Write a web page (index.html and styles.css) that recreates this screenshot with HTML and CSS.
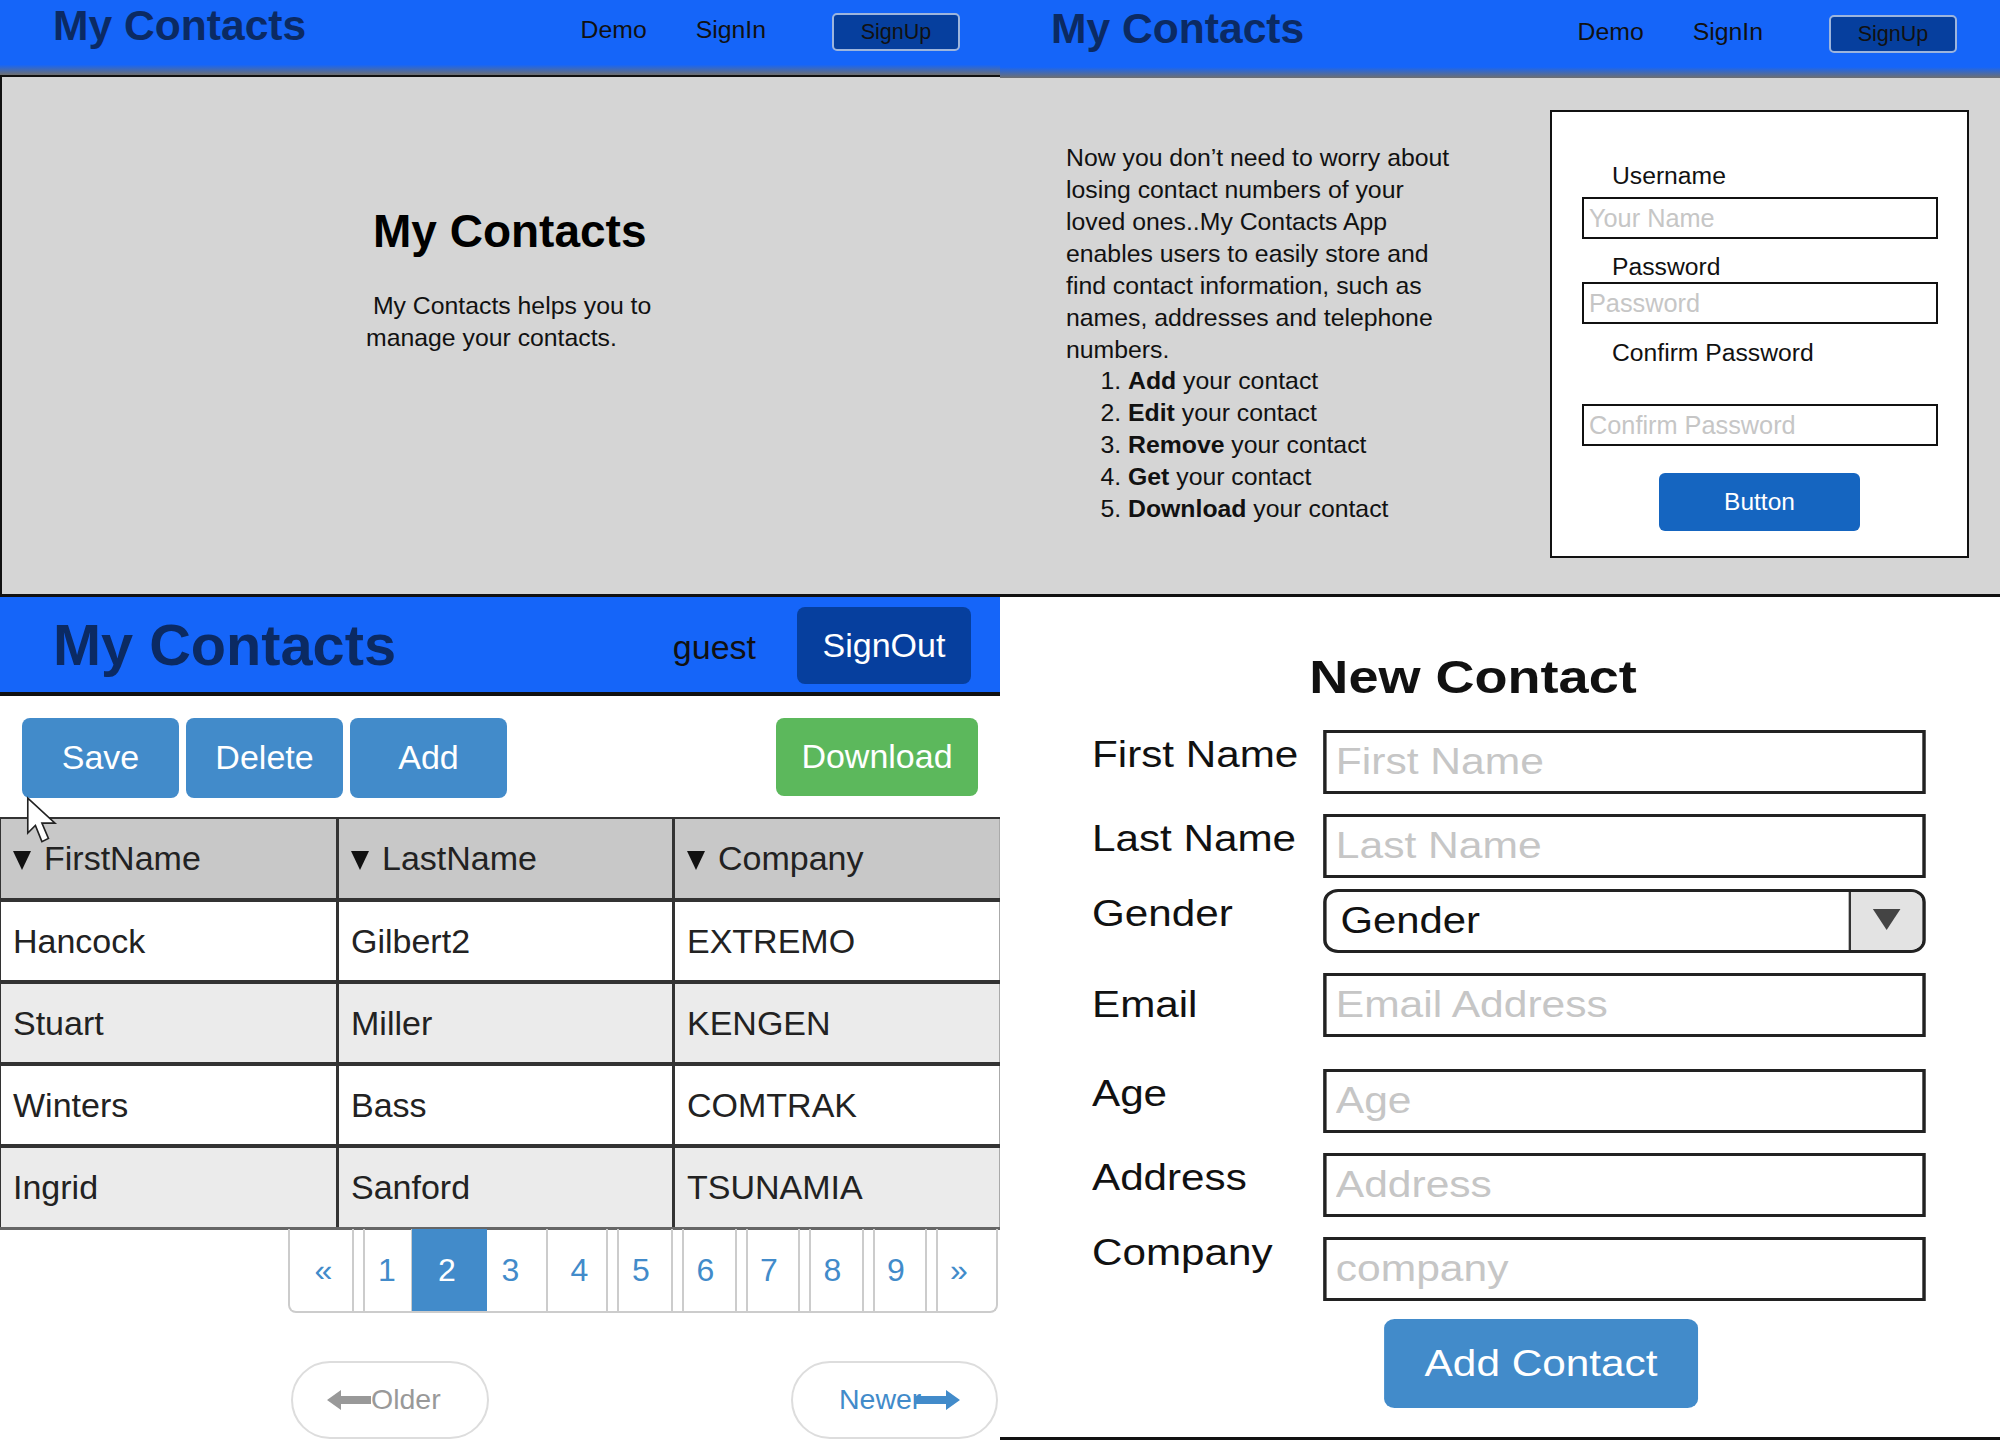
FILE: index.html
```html
<!DOCTYPE html>
<html lang="en">
<head>
  <meta charset="UTF-8">
  <title>My Contacts</title>
  <link rel="stylesheet" href="styles.css">
</head>
<body>
  <div class="collage">

    <!-- Landing screen -->
    <section class="screen screen-landing">
      <header class="topbar">
        <div class="brand">My Contacts</div>
        <nav class="nav">
          <a class="nav-link">Demo</a>
          <a class="nav-link">SignIn</a>
          <a class="nav-button">SignUp</a>
        </nav>
      </header>
      <div class="landing-body">
        <h1>My Contacts</h1>
        <p>&nbsp;My Contacts helps you to<br>manage your contacts.</p>
      </div>
    </section>

    <!-- Sign up screen -->
    <section class="screen screen-signup">
      <header class="topbar">
        <div class="brand">My Contacts</div>
        <nav class="nav">
          <a class="nav-link">Demo</a>
          <a class="nav-link">SignIn</a>
          <a class="nav-button">SignUp</a>
        </nav>
      </header>
      <div class="signup-body">
        <div class="intro">
          <p>Now you don’t need to worry about losing contact numbers of your loved ones..My Contacts App enables users to easily store and find contact information, such as names, addresses and telephone numbers.</p>
          <ol>
            <li><b>Add</b> your contact</li>
            <li><b>Edit</b> your contact</li>
            <li><b>Remove</b> your contact</li>
            <li><b>Get</b> your contact</li>
            <li><b>Download</b> your contact</li>
          </ol>
        </div>
        <form class="signup-card">
          <label class="label-user">Username</label>
          <input type="text" placeholder="Your Name">
          <label class="label-pass">Password</label>
          <input type="text" placeholder="Password">
          <label class="label-confirm">Confirm Password</label>
          <input type="text" placeholder="Confirm Password">
          <button type="button" class="signup-submit">Button</button>
        </form>
      </div>
    </section>

    <!-- Contact list screen -->
    <section class="screen screen-list">
      <header class="listbar">
        <div class="listbar-brand">My Contacts</div>
        <span class="listbar-user">guest</span>
        <a class="listbar-signout">SignOut</a>
      </header>
      <div class="toolbar">
        <button type="button" class="btn">Save</button>
        <button type="button" class="btn">Delete</button>
        <button type="button" class="btn">Add</button>
        <button type="button" class="btn btn-green">Download</button>
      </div>
      <table class="contacts">
        <thead>
          <tr>
            <th><span class="sort"></span>FirstName</th>
            <th><span class="sort"></span>LastName</th>
            <th><span class="sort"></span>Company</th>
          </tr>
        </thead>
        <tbody>
          <tr><td>Hancock</td><td>Gilbert2</td><td>EXTREMO</td></tr>
          <tr><td>Stuart</td><td>Miller</td><td>KENGEN</td></tr>
          <tr><td>Winters</td><td>Bass</td><td>COMTRAK</td></tr>
          <tr><td>Ingrid</td><td>Sanford</td><td>TSUNAMIA</td></tr>
        </tbody>
      </table>
      <div class="pager">
        <a class="page page-first">«</a>
        <a class="page split page-one">1</a>
        <a class="page active">2</a>
        <a class="page page-three">3</a>
        <a class="page page-four">4</a>
        <a class="page split">5</a>
        <a class="page split">6</a>
        <a class="page split">7</a>
        <a class="page split">8</a>
        <a class="page split">9</a>
        <a class="page split page-last">»</a>
      </div>
      <div class="older-newer">
        <a class="pill pill-older">
          <svg class="pill-arrow" width="44" height="20" viewBox="0 0 44 20"><path d="M0 10 L14 0 V6 H44 V14 H14 V20 Z" fill="#999"/></svg>Older
        </a>
        <a class="pill pill-newer">
          Newer<svg class="pill-arrow" width="46" height="20" viewBox="0 0 46 20"><path d="M46 10 L32 0 V6 H0 V14 H32 V20 Z" fill="#428bca"/></svg>
        </a>
      </div>
      <!-- mouse pointer caught in the screenshot -->
      <svg class="pointer" width="36" height="50" viewBox="0 0 32 46">
        <path d="M2 2 L2 34 L9 27 L15 42 L21 39 L15 25 L27 25 Z" fill="#fff" stroke="#222" stroke-width="1.5"/>
      </svg>
    </section>

    <!-- New contact screen -->
    <section class="screen screen-new">
      <form class="new-form">
        <h2>New Contact</h2>
        <div class="field">
          <label>First Name</label>
          <input type="text" placeholder="First Name">
        </div>
        <div class="field">
          <label>Last Name</label>
          <input type="text" placeholder="Last Name">
        </div>
        <div class="field field-tight">
          <label>Gender</label>
          <div class="select-box">
            <span class="select-value">Gender</span>
            <span class="select-arrow"></span>
          </div>
        </div>
        <div class="field field-email">
          <label>Email</label>
          <input type="text" placeholder="Email Address">
        </div>
        <div class="field field-wide">
          <label>Age</label>
          <input type="text" placeholder="Age">
        </div>
        <div class="field">
          <label>Address</label>
          <input type="text" placeholder="Address">
        </div>
        <div class="field field-company">
          <label>Company</label>
          <input type="text" placeholder="company">
        </div>
        <button type="button" class="add-contact">Add Contact</button>
      </form>
    </section>

  </div>
</body>
</html>
```

FILE: styles.css
```css
* {
  box-sizing: border-box;
}
body {
  margin: 0;
  font-family: "Liberation Sans", Arial, sans-serif;
  color: #111;
  background: #fff;
}
.collage {
  display: grid;
  grid-template-columns: 1000px 1000px;
  grid-template-rows: 597px 843px;
  width: 2000px;
  height: 1440px;
  overflow: hidden;
}
.screen {
  position: relative;
  overflow: hidden;
}

/* Top bar of the two first screens */
.topbar {
  display: flex;
  height: 75px;
  padding-left: 53px;
  background: linear-gradient(#1565f9 86%, #6f6f6f);
}
.brand {
  margin-top: 1px;
  font-size: 42.6px;
  line-height: 48px;
  font-weight: bold;
  color: #0b2a63;
}
.nav {
  display: flex;
  align-items: flex-start;
  margin-left: auto;
  padding-top: 13px;
  padding-right: 40px;
}
.nav-link {
  margin-top: 2px;
  margin-right: 49px;
  font-size: 24.8px;
  line-height: 30px;
}
.nav-link + .nav-button {
  margin-left: 17px;
}
.nav-button {
  width: 128px;
  height: 38px;
  border: 2px solid #9db5dd;
  border-radius: 5px;
  background: #063f9e;
  font-size: 21.5px;
  line-height: 34px;
  text-align: center;
}

/* Landing screen */
.landing-body {
  height: 522px;
  padding-left: 364px;
  border: 2px solid #111;
  border-right: none;
  border-bottom-width: 3px;
  background: #d5d5d5;
}
.landing-body h1 {
  margin: 128px 0 0 7px;
  font-size: 46px;
  line-height: 52px;
  color: #000;
}
.landing-body p {
  margin: 33px 0 0;
  font-size: 24.8px;
  line-height: 32px;
}

/* Sign up screen */
.screen-signup .topbar {
  height: 78px;
  padding-left: 51px;
}
.screen-signup .brand {
  margin-top: 4px;
}
.screen-signup .nav {
  padding-top: 15px;
  padding-right: 43px;
}
.signup-body {
  display: flex;
  height: 519px;
  padding-left: 66px;
  border-bottom: 3px solid #111;
  background: #d5d5d5;
}
.intro {
  width: 484px;
  padding-top: 64px;
  font-size: 24.8px;
  line-height: 32px;
}
.intro p {
  width: 392px;
  margin: 0;
}
.intro ol {
  margin: -1px 0 0;
  padding-left: 62px;
}
.signup-card {
  width: 419px;
  height: 448px;
  margin-top: 32px;
  padding: 48px 30px 0;
  border: 2px solid #111;
  background: #fff;
}
.signup-card label {
  display: block;
  padding-left: 30px;
  font-size: 24.7px;
  line-height: 32px;
}
.signup-card input {
  display: block;
  width: 356px;
  height: 42px;
  padding: 0 5px;
  border: 2px solid #111;
  font-family: inherit;
  font-size: 25.3px;
}
.signup-card input::placeholder,
.new-form input::placeholder {
  color: #c6c6c6;
  opacity: 1;
}
.label-user {
  margin-bottom: 5px;
}
.label-pass {
  margin-top: 12px;
  margin-bottom: -1px;
}
.label-confirm {
  margin-top: 13px;
  margin-bottom: 35px;
}
.signup-submit {
  display: block;
  width: 201px;
  height: 58px;
  margin: 27px auto 0;
  border: none;
  border-radius: 6px;
  background: #1565c0;
  color: #fff;
  font-family: inherit;
  font-size: 24.5px;
}

/* Contact list screen */
.listbar {
  display: flex;
  align-items: center;
  height: 99px;
  padding: 0 29px 0 53px;
  border-bottom: 4px solid #111;
  background: #1565f9;
}
.listbar-brand {
  font-size: 57.7px;
  font-weight: bold;
  color: #0b2a63;
}
.listbar-user {
  margin-top: 6px;
  margin-left: auto;
  margin-right: 41px;
  font-size: 34px;
}
.listbar-signout {
  width: 174px;
  height: 77px;
  margin-top: 2px;
  border-radius: 8px;
  background: #063f9e;
  color: #fff;
  font-size: 34px;
  line-height: 76px;
  text-align: center;
}
.toolbar {
  display: flex;
  align-items: flex-start;
  gap: 7px;
  height: 121px;
  padding: 22px 22px 0;
}
.btn {
  width: 157px;
  height: 80px;
  padding-bottom: 3px;
  border: none;
  border-radius: 8px;
  background: #428bca;
  color: #fff;
  font-family: inherit;
  font-size: 34px;
}
.btn-green {
  width: 202px;
  height: 78px;
  margin-left: auto;
  background: #5cb85c;
}
.contacts {
  width: 1000px;
  table-layout: fixed;
  border-collapse: collapse;
  font-size: 34px;
  color: #222;
}
.contacts th,
.contacts td {
  height: 82px;
  padding: 0 0 0 12px;
  border: 3px solid #333;
  border-width: 4px 3px;
  text-align: left;
  font-weight: normal;
}
.contacts th {
  border-top-width: 2px;
}
.contacts th:first-child,
.contacts td:first-child {
  width: 337px;
  border-left-width: 1px;
}
.contacts th:nth-child(2),
.contacts td:nth-child(2) {
  width: 336px;
}
.contacts th:last-child,
.contacts td:last-child {
  border-right: 1px solid #aaa;
}
.contacts tbody tr:last-child td {
  border-bottom-color: #666;
  border-bottom-width: 3px;
}
.contacts thead tr {
  background: #c8c8c8;
}
.contacts tbody tr:nth-child(even) {
  background: #ebebeb;
}
.sort {
  display: inline-block;
  margin-right: 13px;
  border-left: 9px solid transparent;
  border-right: 9px solid transparent;
  border-top: 19px solid #111;
}
.pager {
  display: grid;
  grid-template-columns: 64px 59px 74px 61px 60px 65px 64px 63px 64px 63px 73px;
  width: 710px;
  height: 84px;
  margin-top: -1px;
  margin-left: 288px;
  border: 2px solid #ccc;
  border-top: none;
  border-radius: 0 0 8px 8px;
}
.page {
  border-right: 2px solid #ccc;
  color: #428bca;
  font-size: 32px;
  line-height: 82px;
  text-align: center;
}
.page:last-child {
  border-right: none;
}
.split {
  margin-left: 9px;
  padding-right: 8px;
  border-left: 2px solid #ccc;
}
.page-first {
  padding-left: 5px;
}
.page-one {
  padding-right: 2px;
}
.page-three {
  padding-right: 12px;
}
.page-four {
  padding-left: 5px;
}
.page-last {
  padding-right: 20px;
}
.active {
  margin-left: -1px;
  padding-right: 5px;
  border: none;
  background: #428bca;
  color: #fff;
}
.older-newer {
  display: flex;
  justify-content: space-between;
  margin: 48px 2px 0 291px;
}
.pill {
  display: flex;
  align-items: center;
  height: 78px;
  border: 2px solid #ddd;
  border-radius: 40px;
  font-size: 28.5px;
}
.pill-older {
  width: 198px;
  padding-left: 34px;
  color: #999;
}
.pill-newer {
  width: 207px;
  padding-left: 46px;
  color: #428bca;
}
.pill-newer .pill-arrow {
  margin-left: -7px;
}
.pointer {
  position: absolute;
  left: 25px;
  top: 199px;
}

/* New contact screen */
.screen-new {
  border-bottom: 3px solid #111;
}
/* this screen is stretched sideways in the screenshot */
.new-form {
  width: 870px;
  padding-top: 53px;
  padding-left: 80px;
  transform: scaleX(1.15);
  transform-origin: 0 0;
}
.new-form h2 {
  margin: 0 0 0 189px;
  font-size: 47px;
  line-height: 54px;
}
.field {
  display: flex;
  height: 64px;
  margin-top: 20px;
}
h2 + .field {
  margin-top: 26px;
}
.field label {
  width: 201px;
  margin-top: 5px;
  font-size: 36.7px;
  line-height: 40px;
}
.field input,
.select-box {
  width: 524px;
  height: 64px;
  border: 3px solid #222;
  font-family: inherit;
}
.field input {
  padding: 0 8px;
  font-size: 37px;
}
.field-tight {
  margin-top: 11px;
}
.field-email label {
  margin-top: 12px;
}
.field-wide {
  margin-top: 32px;
}
.field-company label {
  margin-top: -4px;
}
.select-box {
  display: flex;
  border-radius: 13px;
  overflow: hidden;
  font-size: 36.4px;
}
.select-value {
  flex: 1;
  padding-left: 12px;
  line-height: 58px;
}
.select-arrow {
  position: relative;
  width: 64px;
  border-left: 2px solid #333;
  background: #e3e3e3;
}
.select-arrow::after {
  content: "";
  position: absolute;
  left: 19px;
  top: 17px;
  border-left: 12px solid transparent;
  border-right: 12px solid transparent;
  border-top: 21px solid #444;
}
.add-contact {
  display: block;
  width: 273px;
  height: 89px;
  margin: 18px 0 0 254px;
  border: none;
  border-radius: 9px;
  background: #428bca;
  color: #fff;
  font-family: inherit;
  font-size: 36.8px;
}
```
